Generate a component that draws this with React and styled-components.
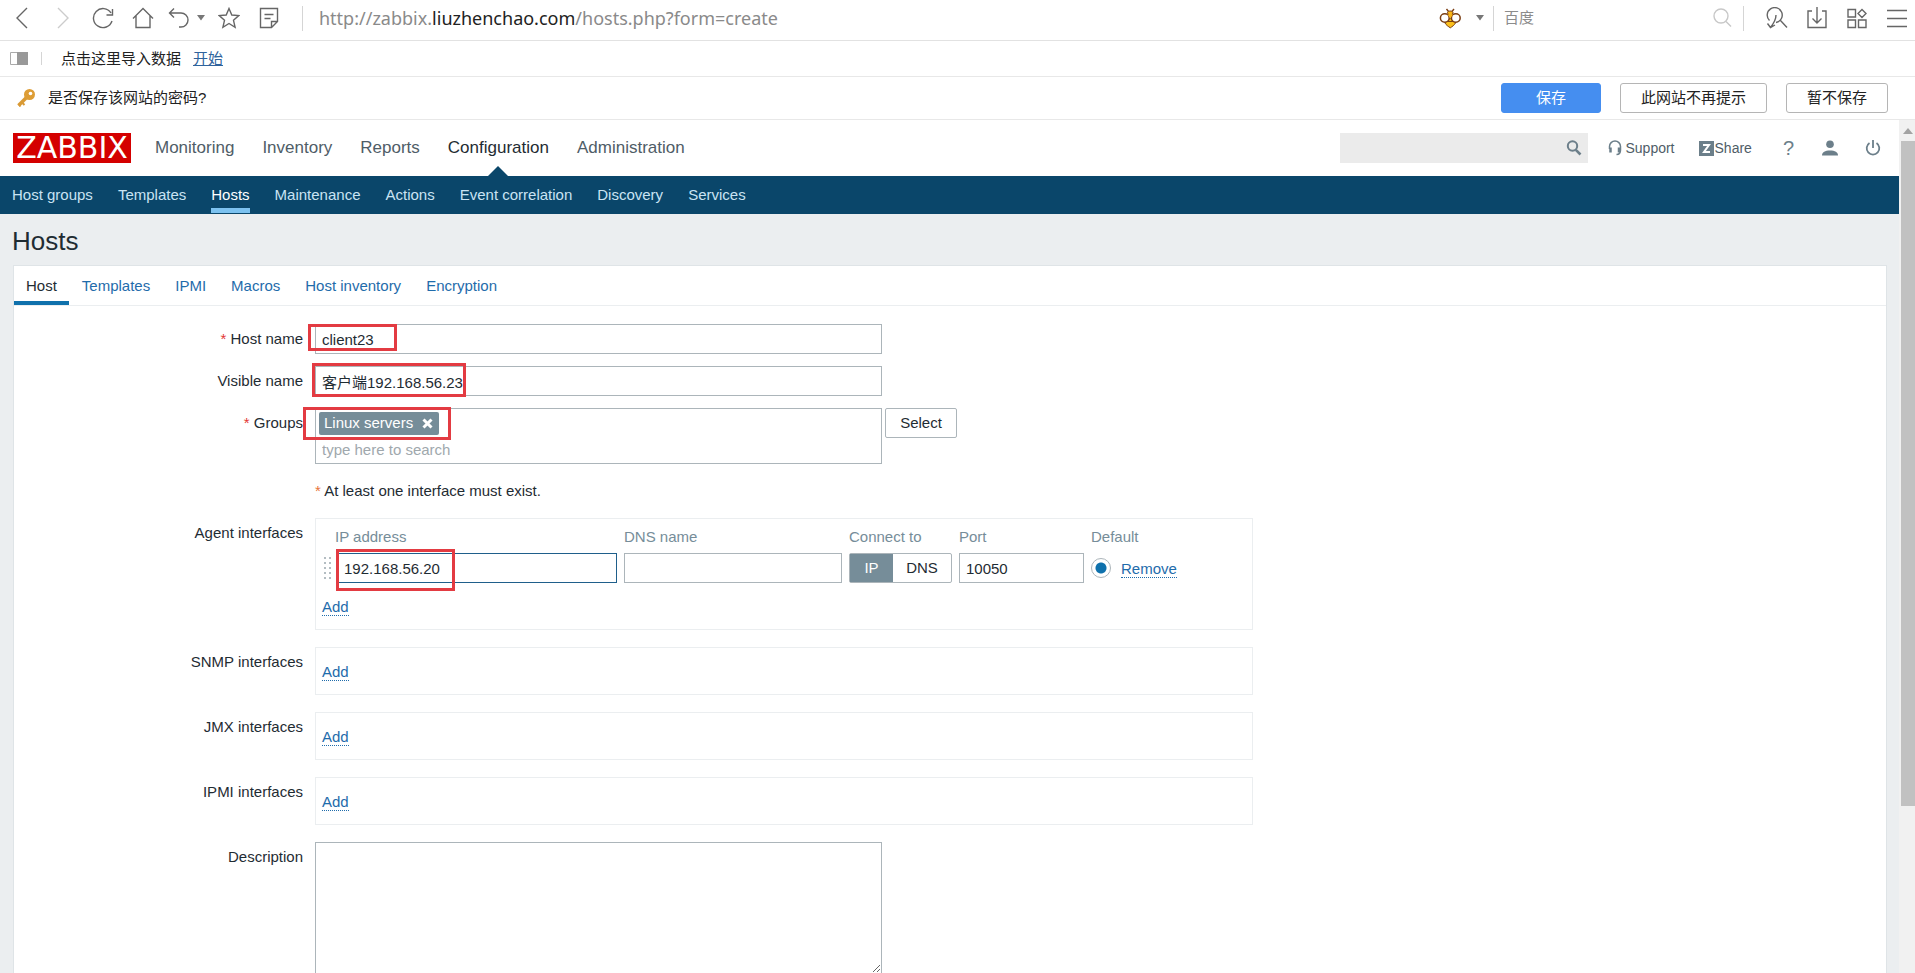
import { useState } from "react";
import styled, { createGlobalStyle, css } from "styled-components";

const GlobalStyle = createGlobalStyle`
  * {
    box-sizing: border-box;
  }
  html, body, #root {
    height: 100%;
  }
  body {
    margin: 0;
    overflow: hidden;
    font-family: "Liberation Sans", Arial, "Noto Sans CJK SC", sans-serif;
    font-size: 15px;
    line-height: 20px;
    color: #1f2c33;
    background-color: #fff;
  }
  button, input, textarea {
    font: inherit;
    color: inherit;
  }
`;

const Window = styled.div`
  display: flex;
  flex-direction: column;
  height: 100vh;
`;

/* browser bars */

const AddressBar = styled.div`
  display: flex;
  align-items: center;
  flex: none;
  height: 41px;
  padding: 0 7px 4px 12px;
  border-bottom: 1px solid #e2e2e2;
`;

const IconButton = styled.button`
  display: flex;
  align-items: center;
  justify-content: center;
  flex: none;
  width: 22px;
  height: 24px;
  padding: 0;
  border: 0;
  background: none;
`;

const ToolGroup = styled.div`
  display: flex;
  align-items: center;
  gap: ${(props) => props.$gap || 0}px;
  margin-left: ${(props) => props.$space || 0}px;
`;

const Divider = styled.span`
  flex: none;
  width: 1px;
  height: ${(props) => props.$height}px;
  background-color: #d5d5d5;
`;

const Address = styled.div`
  flex: 1;
  padding-left: 16px;
  font-family: "Noto Sans", "Open Sans", sans-serif;
  font-size: 18px;
  line-height: 24px;
  color: #8a8a8a;

  b {
    font-weight: normal;
    color: #222;
  }
`;

const EngineInput = styled.input`
  width: 207px;
  padding: 0;
  margin-left: 10px;
  border: 0;
  outline: 0;
  background: none;

  &::placeholder {
    color: #8c8c8c;
    opacity: 1;
  }
`;

const BookmarkBar = styled.div`
  display: flex;
  align-items: center;
  flex: none;
  height: 36px;
  padding-left: 10px;
  border-bottom: 1px solid #e8e8e8;
  color: #222;

  a {
    margin-left: 12px;
    color: #2f639c;
  }
`;

const ImportText = styled.span`
  margin-left: 19px;
`;

const PasswordBar = styled.div`
  display: flex;
  align-items: center;
  flex: none;
  height: 43px;
  padding: 0 27px 0 16px;
  border-bottom: 1px solid #e8e8e8;
  color: #222;
`;

const PasswordText = styled.span`
  flex: 1;
  margin-left: 12px;
`;

const BarButton = styled.button`
  height: 30px;
  padding: 0 20px;
  margin-left: 19px;
  border: 1px solid #b5b5b5;
  border-radius: 3px;
  background-color: #fff;

  ${(props) =>
    props.$primary &&
    css`
      padding: 0 34px;
      border-color: #458ef0;
      background-color: #458ef0;
      color: #fff;
    `}
`;

/* page */

const Viewport = styled.div`
  display: flex;
  flex: 1;
  min-height: 0;
`;

const Page = styled.div`
  flex: 1;
  overflow: hidden;
  background-color: #ebeef0;
`;

const ScrollTrack = styled.div`
  flex: none;
  display: flex;
  flex-direction: column;
  align-items: flex-end;
  width: 16px;
  background-color: #f1f1f1;
`;

const ScrollUp = styled.button`
  display: flex;
  align-items: center;
  justify-content: center;
  width: 14px;
  height: 21px;
  padding: 0;
  border: 0;
  background: none;
`;

const ScrollThumb = styled.div`
  width: 14px;
  height: 78%;
  background-color: #c1c1c1;
`;

const Header = styled.header`
  display: flex;
  align-items: center;
  height: 56px;
  padding: 0 18px 0 13px;
  background-color: #fff;
`;

const Logo = styled.a`
  display: block;
  width: 118px;
  height: 30px;
  background-color: #d40000;
  color: #fff;
  font-family: "DejaVu Sans", sans-serif;
  font-size: 30px;
  line-height: 30px;
  text-align: center;
  text-decoration: none;
`;

const MainMenu = styled.nav`
  display: flex;
  flex: 1;
  gap: 28px;
  height: 100%;
  margin-left: 24px;
`;

const MainLink = styled.a`
  position: relative;
  font-size: 17px;
  line-height: 56px;
  color: ${(props) => (props.$active ? "#1f2c33" : "#4f5d67")};
  text-decoration: none;

  ${(props) =>
    props.$active &&
    css`
      &::after {
        content: "";
        position: absolute;
        bottom: 0;
        left: 50%;
        margin-left: -10px;
        border: 10px solid transparent;
        border-top-width: 0;
        border-bottom-color: #0a466a;
      }
    `}
`;

const SearchBox = styled.div`
  display: flex;
  align-items: center;
  width: 248px;
  height: 30px;
  padding-right: 6px;
  background-color: #ebebeb;

  input {
    flex: 1;
    min-width: 0;
    border: 0;
    outline: 0;
    background: none;
  }
`;

const UserLinks = styled.div`
  display: flex;
  align-items: center;
  margin-left: 20px;
`;

const UserLink = styled.a`
  display: flex;
  align-items: center;
  gap: ${(props) => props.$gap || 0}px;
  margin-right: ${(props) => props.$space || 0}px;
  font-size: 14px;
  color: #4f5d67;
  text-decoration: none;
`;

const HelpMark = styled.span`
  font-size: 20px;
  color: #6c7f8a;
`;

const SubMenu = styled.nav`
  display: flex;
  gap: 25px;
  height: 38px;
  padding: 0 12px;
  background-color: #0a466a;
`;

const SubLink = styled.a`
  height: 37px;
  line-height: 38px;
  border-bottom: 5px solid ${(props) => (props.$active ? "#7cc2f0" : "transparent")};
  color: ${(props) => (props.$active ? "#fff" : "#c9e3f3")};
  text-decoration: none;
`;

const Title = styled.h1`
  margin: 0;
  padding: 12px 12px 9px;
  font-size: 26px;
  font-weight: normal;
  line-height: 30px;
`;

const Panel = styled.main`
  min-height: 720px;
  margin: 0 12px 0 13px;
  border: 1px solid #dfe4e7;
  background-color: #fff;
`;

const Tabs = styled.div`
  display: flex;
  gap: 1px;
  height: 40px;
  border-bottom: 1px solid #ebeef0;
`;

const Tab = styled.button`
  padding: 4px 12px 0;
  border: 0;
  border-bottom: 4px solid ${(props) => (props.$active ? "#0f71ac" : "transparent")};
  background: none;
  color: ${(props) => (props.$active ? "#1f2c33" : "#1f6cab")};
`;

const Form = styled.form`
  display: flex;
  flex-direction: column;
  gap: 12px;
  padding-top: 18px;
`;

const InterfaceRows = styled.div`
  display: flex;
  flex-direction: column;
  gap: 17px;
`;

const Row = styled.div`
  display: grid;
  grid-template-columns: 289px 1fr;
  column-gap: 12px;
`;

const Label = styled.label`
  line-height: 30px;
  text-align: right;

  ${(props) =>
    props.$required &&
    css`
      &::before {
        content: "* ";
        color: #e33734;
      }
    `}
`;

const Field = styled.div`
  position: relative;
  display: flex;
  align-items: flex-start;
  gap: 3px;
`;

const TextInput = styled.input`
  display: block;
  width: ${(props) => props.$width}px;
  height: 30px;
  padding: 0 6px;
  border: 1px solid ${(props) => (props.$focused ? "#1f5f8b" : "#acb5ba")};
  border-radius: 0;
  outline: 0;
  background-color: #fff;
`;

const MultiSelect = styled.div`
  display: flex;
  flex-direction: column;
  align-items: flex-start;
  width: 567px;
  height: 56px;
  padding: 3px;
  border: 1px solid #acb5ba;

  input {
    width: 100%;
    height: 28px;
    padding: 4px 3px 0;
    border: 0;
    outline: 0;
    background: none;
  }

  input::placeholder {
    color: #a0a8ad;
    opacity: 1;
  }
`;

const Tag = styled.span`
  display: flex;
  align-items: center;
  flex: none;
  gap: 8px;
  height: 23px;
  padding: 0 5px 1px;
  border-radius: 2px;
  background-color: #768d99;
  color: #fff;

  button {
    display: flex;
    padding: 1px;
    border: 0;
    background: none;
  }
`;

const PlainButton = styled.button`
  width: 72px;
  height: 30px;
  padding: 0;
  border: 1px solid #acb5ba;
  border-radius: 2px;
  background-color: #fff;
`;

const Note = styled.span`
  line-height: 30px;

  &::before {
    content: "* ";
    color: #e8743a;
  }
`;

const InterfaceBox = styled.div`
  width: 938px;
  padding: ${(props) => (props.$filled ? "8px" : "14px")} 6px 12px;
  border: 1px solid #ebeef0;
`;

const InterfaceTable = styled.table`
  margin-bottom: 14px;
  border-collapse: collapse;

  th {
    padding: 0 0 6px;
    font-weight: normal;
    text-align: left;
    color: #768d99;
  }

  td {
    padding: 0 7px 0 0;
  }

  td:first-child {
    width: 15px;
    padding-right: 6px;
  }
`;

const Segmented = styled.div`
  display: flex;
  height: 30px;
  border: 1px solid #acb5ba;
  border-radius: 2px;
`;

const Segment = styled.label`
  width: ${(props) => props.$width}px;
  line-height: 28px;
  text-align: center;

  input {
    position: absolute;
    opacity: 0;
  }

  &:has(input:checked) {
    background-color: #768d99;
    color: #fff;
  }
`;

const DefaultCell = styled.div`
  display: flex;
  align-items: center;
  gap: 10px;
`;

const Radio = styled.input`
  appearance: none;
  width: 20px;
  height: 20px;
  margin: 0;
  border: 1px solid #acb5ba;
  border-radius: 50%;
  background: radial-gradient(circle, #0f71ac 5px, #fff 6px);
`;

const ActionLink = styled.button`
  display: block;
  height: 19px;
  padding: 0;
  border: 0;
  border-bottom: 1px dotted #1f6cab;
  background: none;
  line-height: 20px;
  color: #1f6cab;
`;

const AddRow = styled.div`
  height: 20px;
`;

const Description = styled.textarea`
  display: block;
  width: 567px;
  height: 132px;
  padding: 4px 6px;
  border: 1px solid #acb5ba;
  outline: 0;
  resize: vertical;
`;

/* red frame drawn over a field */
const Mark = styled.span`
  position: absolute;
  top: ${(props) => props.$top}px;
  left: ${(props) => props.$left}px;
  width: ${(props) => props.$width}px;
  height: ${(props) => props.$height}px;
  border: 3px solid #e33b42;
  pointer-events: none;
`;

const DragIcon = styled.svg`
  display: block;
  width: 9px;
  height: 24px;
  fill: #b4bdc2;
`;

const Line = ({ size = 22, color = "#666", children }) => (
  <svg
    width={size}
    height={size}
    viewBox="0 0 22 22"
    fill="none"
    stroke={color}
    strokeWidth="1.4"
    aria-hidden="true"
  >
    {children}
  </svg>
);

const Caret = () => (
  <svg width="8" height="6" viewBox="0 0 8 6" aria-hidden="true">
    <path d="M0 0h8L4 5.5z" fill="#777" />
  </svg>
);

const BeeIcon = () => (
  <svg width="22" height="22" viewBox="0 0 22 22" stroke="#7a3d12" aria-hidden="true">
    <path d="M7.5 2l2 2.500M15 2l-2 2.500" strokeWidth="1.4" fill="none" />
    <path d="M8.500 5.500c.5-2 5-2 5.500 0L13 8.500h-3.500z" fill="#f9b517" />
    <path d="M11.300 11.500c2 1 5.200 2.500 5.200 4.500-1 2-3.200 3.500-5.200 4.800-2-1.300-4.300-2.800-5.300-4.800 0-2 3.300-3.500 5.300-4.500z" fill="#fbc01b" />
    <path d="M7 14.500h8.500" strokeWidth="1" />
    <ellipse cx="5.800" cy="11" rx="4.400" ry="4.200" fill="#fff" strokeWidth="1.5" />
    <ellipse cx="16.800" cy="11" rx="4.400" ry="4.200" fill="#fff" strokeWidth="1.5" />
    <path d="M8.500 7.500h5.500l-2.700 4z" fill="#f9b517" stroke="none" />
  </svg>
);

const KeyIcon = () => (
  <svg width="20" height="20" viewBox="0 0 20 20" aria-hidden="true">
    <path d="M10.5 9.5L2.500 17.500" stroke="#d99a35" strokeWidth="3.6" />
    <path d="M5.5 14l3 3M2.500 16l2 2.500" stroke="#d99a35" strokeWidth="2" />
    <circle cx="13.5" cy="6.5" r="5.5" fill="#dd9d36" />
    <circle cx="14.5" cy="5.5" r="1.8" fill="#fff" />
  </svg>
);

const SidebarIcon = () => (
  <svg width="18" height="13" viewBox="0 0 18 13" aria-hidden="true">
    <path d="M.5 .5h17v12H.5z" fill="#fff" stroke="#aaa" />
    <path d="M7 0h11v13H7z" fill="#999" />
  </svg>
);

const SearchIcon = () => (
  <svg width="16" height="16" viewBox="0 0 16 16" fill="none" stroke="#6c7f8a" aria-hidden="true">
    <circle cx="6.5" cy="6" r="4.700" strokeWidth="2" />
    <path d="M9.800 9.800l4.700 4.700" strokeWidth="2.600" />
  </svg>
);

const SupportIcon = () => (
  <svg width="14" height="16" viewBox="0 0 14 16" fill="none" stroke="#6c7f8a" aria-hidden="true">
    <path d="M1.5 9V6.500a5.500 5.500 0 0 1 11 0V10c0 3-1.500 4.500-4 4.500" strokeWidth="1.5" />
    <path d="M2.500 7.500v5M11 7.500v5" strokeWidth="2.500" />
  </svg>
);

const ShareIcon = () => (
  <svg width="15" height="15" viewBox="0 0 15 15" aria-hidden="true">
    <path d="M0 0h15v15H0z" fill="#6c7f8a" />
    <path d="M4 4h6L5 11h6" fill="none" stroke="#fff" strokeWidth="2" />
  </svg>
);

const UserIcon = () => (
  <svg width="16" height="16" viewBox="0 0 16 16" fill="#6c7f8a" aria-hidden="true">
    <circle cx="8" cy="4.200" r="3.800" />
    <path d="M0 15.500c0-3.500 3-5 8-5s8 1.500 8 5z" />
  </svg>
);

const PowerIcon = () => (
  <svg width="16" height="16" viewBox="0 0 16 16" fill="none" stroke="#6c7f8a" strokeWidth="1.800" aria-hidden="true">
    <path d="M4.500 3a6.300 6.300 0 1 0 7 0M8 0v8" />
  </svg>
);

const mainMenu = ["Monitoring", "Inventory", "Reports", "Configuration", "Administration"];
const subMenu = [
  "Host groups",
  "Templates",
  "Hosts",
  "Maintenance",
  "Actions",
  "Event correlation",
  "Discovery",
  "Services",
];
const tabs = ["Host", "Templates", "IPMI", "Macros", "Host inventory", "Encryption"];

const BrowserBars = () => {
  return (
    <>
      <AddressBar>
        <ToolGroup $gap={18}>
          <IconButton aria-label="Back">
            <Line><path d="M15 1L5 11l10 10" /></Line>
          </IconButton>
          <IconButton aria-label="Forward">
            <Line color="#ccc"><path d="M6 1l10 10L6 21" /></Line>
          </IconButton>
          <IconButton aria-label="Reload">
            <Line><path d="M20 14A9.500 9.500 0 1 1 19 6M20.500 2v6h-6" /></Line>
          </IconButton>
          <IconButton aria-label="Home">
            <Line><path d="M1 11.500L11 1.500l10 10M4 9v11.500h14V9" /></Line>
          </IconButton>
        </ToolGroup>
        <ToolGroup $gap={7} $space={14}>
          <IconButton aria-label="Undo">
            <Line><path d="M6 1.500L1.500 6 6 10.500M1.500 6H13a7 7 0 0 1 0 14h-2" /></Line>
          </IconButton>
          <Caret />
        </ToolGroup>
        <ToolGroup $gap={18} $space={13}>
          <IconButton aria-label="Favorite">
            <Line>
              <path d="M11 1.500l2.800 6.500 7 .6-5.300 4.700 1.600 7L11 16.500l-6.100 3.800 1.600-7L1.200 8.600l7-.6z" />
            </Line>
          </IconButton>
          <IconButton aria-label="Notes">
            <Line>
              <path d="M2.500 1.500h17v13l-6 6h-11zM19.500 14.500h-6v6M6.500 7.500h9M6.500 11.500h6" />
            </Line>
          </IconButton>
        </ToolGroup>
        <ToolGroup $space={22}>
          <Divider $height={25} />
        </ToolGroup>
        <Address>
          http://zabbix.<b>liuzhenchao.com</b>/hosts.php?form=create
        </Address>
        <ToolGroup>
          <BeeIcon />
        </ToolGroup>
        <ToolGroup $gap={9} $space={15}>
          <Caret />
          <Divider $height={25} />
        </ToolGroup>
        <EngineInput placeholder="百度" aria-label="百度" />
        <ToolGroup $gap={10}>
          <Line color="#c8c8c8">
            <circle cx="10" cy="9" r="7" />
            <path d="M15 14.500l5 5" />
          </Line>
          <Divider $height={25} />
        </ToolGroup>
        <ToolGroup $gap={18} $space={22}>
          <IconButton aria-label="Find">
            <Line>
              <path d="M3.500 13.500A7.500 7.500 0 1 1 10 15.500M14.500 13.500l6.500 7M10 8c0 5-2 8-5.500 12.500M1.500 16.500l3 4 4.500-2.500" />
            </Line>
          </IconButton>
          <IconButton aria-label="Downloads">
            <Line>
              <path d="M6 4H2v16.500h18V4h-4M11 0v16M6.500 11.500L11 16l4.500-4.500" />
            </Line>
          </IconButton>
          <IconButton aria-label="Apps">
            <Line>
              <path d="M2 2.500h7.500V10H2zM2 13h7.500v7.500H2zM12.500 13H20v7.500h-7.500zM16 2.500l4 4-4 4-4-4z" />
            </Line>
          </IconButton>
          <IconButton aria-label="Menu">
            <Line><path d="M1 3.500h20M1 11.500h20M1 19.500h20" /></Line>
          </IconButton>
        </ToolGroup>
      </AddressBar>
      <BookmarkBar>
        <SidebarIcon />
        <ToolGroup $space={13}>
          <Divider $height={13} />
        </ToolGroup>
        <ImportText>点击这里导入数据</ImportText>
        <a href="#import">开始</a>
      </BookmarkBar>
      <PasswordBar>
        <KeyIcon />
        <PasswordText>是否保存该网站的密码?</PasswordText>
        <BarButton $primary>保存</BarButton>
        <BarButton>此网站不再提示</BarButton>
        <BarButton>暂不保存</BarButton>
      </PasswordBar>
    </>
  );
};

const PageHeader = () => {
  return (
    <>
      <Header>
        <Logo href="#home">ZABBIX</Logo>
        <MainMenu>
          {mainMenu.map((item) => (
            <MainLink key={item} href="#menu" $active={item === "Configuration"}>
              {item}
            </MainLink>
          ))}
        </MainMenu>
        <SearchBox>
          <input type="text" aria-label="Search" />
          <SearchIcon />
        </SearchBox>
        <UserLinks>
          <UserLink href="#support" $gap={3} $space={24}>
            <SupportIcon />
            Support
          </UserLink>
          <UserLink href="#share" $gap={1} $space={31}>
            <ShareIcon />
            Share
          </UserLink>
          <UserLink href="#help" $space={28}>
            <HelpMark>?</HelpMark>
          </UserLink>
          <UserLink href="#profile" $space={27} aria-label="Profile">
            <UserIcon />
          </UserLink>
          <UserLink href="#signout" aria-label="Sign out">
            <PowerIcon />
          </UserLink>
        </UserLinks>
      </Header>
      <SubMenu>
        {subMenu.map((item) => (
          <SubLink key={item} href="#submenu" $active={item === "Hosts"}>
            {item}
          </SubLink>
        ))}
      </SubMenu>
    </>
  );
};

const AgentTable = () => {
  const [connect, setConnect] = useState("IP");

  return (
    <InterfaceTable>
      <thead>
        <tr>
          <th colSpan="2">
            <ToolGroup $space={13}>IP address</ToolGroup>
          </th>
          <th>DNS name</th>
          <th>Connect to</th>
          <th>Port</th>
          <th>Default</th>
        </tr>
      </thead>
      <tbody>
        <tr>
          <td>
            <DragIcon viewBox="0 0 9 24" aria-hidden="true">
              {[1, 6, 11, 16, 21].map((y) => (
                <path key={y} d={`M2 ${y}h2v2h-2zM7 ${y}h2v2h-2z`} />
              ))}
            </DragIcon>
          </td>
          <td>
            <Field>
              <TextInput $width={280} $focused defaultValue="192.168.56.20" aria-label="IP address" />
              <Mark $top={-4} $left={-1} $width={119} $height={42} />
            </Field>
          </td>
          <td>
            <TextInput $width={218} aria-label="DNS name" />
          </td>
          <td>
            <Segmented>
              {["IP", "DNS"].map((type) => (
                <Segment key={type} $width={type === "IP" ? 43 : 58}>
                  <input
                    type="radio"
                    name="connect"
                    checked={connect === type}
                    onChange={() => setConnect(type)}
                  />
                  {type}
                </Segment>
              ))}
            </Segmented>
          </td>
          <td>
            <TextInput $width={125} defaultValue="10050" aria-label="Port" />
          </td>
          <td>
            <DefaultCell>
              <Radio type="radio" name="default" defaultChecked aria-label="Default" />
              <ActionLink type="button">Remove</ActionLink>
            </DefaultCell>
          </td>
        </tr>
      </tbody>
    </InterfaceTable>
  );
};

const HostForm = () => {
  return (
    <Form>
      <Row>
        <Label htmlFor="host" $required>Host name</Label>
        <Field>
          <TextInput id="host" $width={567} defaultValue="client23" />
          <Mark $top={0} $left={-7} $width={89} $height={27} />
        </Field>
      </Row>
      <Row>
        <Label htmlFor="visible">Visible name</Label>
        <Field>
          <TextInput id="visible" $width={567} defaultValue="客户端192.168.56.23" />
          <Mark $top={-3} $left={-3} $width={154} $height={34} />
        </Field>
      </Row>
      <Row>
        <Label htmlFor="groups" $required>Groups</Label>
        <Field>
          <MultiSelect>
            <Tag>
              Linux servers
              <button type="button" aria-label="Remove group">
                <svg width="11" height="11" viewBox="0 0 11 11" aria-hidden="true">
                  <path d="M1.500 1.500l8 8M9.500 1.500l-8 8" stroke="#fff" strokeWidth="3" />
                </svg>
              </button>
            </Tag>
            <input id="groups" type="text" placeholder="type here to search" />
          </MultiSelect>
          <PlainButton type="button">Select</PlainButton>
          <Mark $top={-1} $left={-12} $width={148} $height={33} />
        </Field>
      </Row>
      <Row>
        <span />
        <Note>At least one interface must exist.</Note>
      </Row>
      <InterfaceRows>
        {["Agent", "SNMP", "JMX", "IPMI"].map((name) => (
          <Row key={name}>
            <Label htmlFor={`add-${name}`}>{name} interfaces</Label>
            <InterfaceBox $filled={name === "Agent"}>
              {name === "Agent" && <AgentTable />}
              <AddRow>
                <ActionLink type="button" id={`add-${name}`}>Add</ActionLink>
              </AddRow>
            </InterfaceBox>
          </Row>
        ))}
        <Row>
          <Label htmlFor="description">Description</Label>
          <Description id="description" />
        </Row>
      </InterfaceRows>
    </Form>
  );
};

const App = () => {
  const [tab, setTab] = useState("Host");

  return (
    <Window>
      <GlobalStyle />
      <BrowserBars />
      <Viewport>
        <Page>
          <PageHeader />
          <Title>Hosts</Title>
          <Panel>
            <Tabs>
              {tabs.map((name) => (
                <Tab key={name} $active={name === tab} onClick={() => setTab(name)}>
                  {name}
                </Tab>
              ))}
            </Tabs>
            <HostForm />
          </Panel>
        </Page>
        <ScrollTrack>
          <ScrollUp aria-label="Scroll up">
            <svg width="10" height="6" viewBox="0 0 10 6" aria-hidden="true">
              <path d="M0 6h10L5 0z" fill="#a3a3a3" />
            </svg>
          </ScrollUp>
          <ScrollThumb />
        </ScrollTrack>
      </Viewport>
    </Window>
  );
};

export default App;
